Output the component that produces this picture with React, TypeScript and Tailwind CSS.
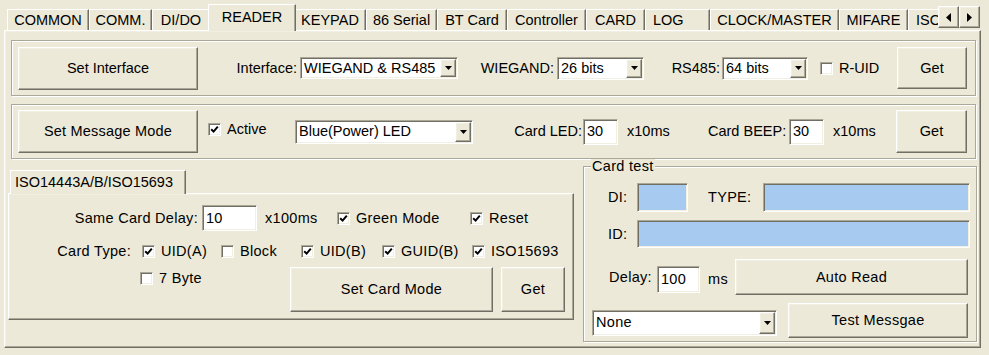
import clsx from 'clsx'
import type { ReactNode } from 'react'

const RAISED =
  'border border-t-white border-l-white border-r-[#716F64] border-b-[#716F64] shadow-[inset_-1px_-1px_0_#ACA899,inset_1px_1px_0_#F1EFE2]'
const SUNKEN =
  'border border-t-[#ACA899] border-l-[#ACA899] border-r-white border-b-white shadow-[inset_1px_1px_0_#716F64,inset_-1px_-1px_0_#F1EFE2]'
const ETCHED = 'border border-[#ACA899] shadow-[inset_1px_1px_0_#fff,1px_1px_0_#fff]'

const TABS = [
  { label: 'COMMON', w: 'w-[82px]' },
  { label: 'COMM.', w: 'w-[63px]' },
  { label: 'DI/DO', w: 'w-[58px]' },
  { label: 'READER', w: 'w-[88px]', active: true },
  { label: 'KEYPAD', w: 'w-[72px]' },
  { label: '86 Serial', w: 'w-[71px]' },
  { label: 'BT Card', w: 'w-[70px]' },
  { label: 'Controller', w: 'w-[79px]' },
  { label: 'CARD', w: 'w-[59px]' },
  { label: 'LOG', w: 'w-[65px]', left: true },
  { label: 'CLOCK/MASTER', w: 'w-[129px]' },
  { label: 'MIFARE', w: 'w-[69px]' },
  { label: 'ISO15693', w: 'w-[80px]', left: true },
]

function Button({ className, children }: { className?: string; children: ReactNode }) {
  return (
    <button type="button" className={clsx('flex shrink-0 items-center justify-center bg-[#ECE9D8]', RAISED, className)}>
      {children}
    </button>
  )
}

function Edit({ className, value }: { className?: string; value?: string }) {
  return <div className={clsx('flex shrink-0 items-center bg-white pl-[3px]', SUNKEN, className)}>{value}</div>
}

function Arrow({ dir }: { dir: 'down' | 'left' | 'right' }) {
  if (dir === 'down')
    return (
      <svg width="7" height="4" viewBox="0 0 7 4">
        <path d="M0 0h7L3.5 4z" fill="#000" />
      </svg>
    )
  return (
    <svg width="5" height="9" viewBox="0 0 5 9">
      <path d={dir === 'left' ? 'M5 0v9L0 4.5z' : 'M0 0v9l5-4.5z'} fill="#000" />
    </svg>
  )
}

function Combo({ className, value }: { className?: string; value: string }) {
  return (
    <div className={clsx('flex shrink-0 items-stretch bg-white', SUNKEN, className)}>
      <span className="flex flex-1 items-center pl-[3px]">{value}</span>
      <span className={clsx('m-px flex w-[16px] items-center justify-center bg-[#ECE9D8]', RAISED)}>
        <Arrow dir="down" />
      </span>
    </div>
  )
}

function Check({ checked }: { checked?: boolean }) {
  return (
    <span className={clsx('flex h-[13px] w-[13px] shrink-0 items-center justify-center bg-white', SUNKEN)}>
      {checked && (
        <svg width="9" height="9" viewBox="0 0 9 9">
          <path d="M1.2 4.2 3.6 6.6 7.8 1.6" stroke="#000" strokeWidth="2" fill="none" />
        </svg>
      )}
    </span>
  )
}

function CheckItem({ label, checked, className }: { label: string; checked?: boolean; className?: string }) {
  return (
    <div className={clsx('flex shrink-0 items-center', className)}>
      <Check checked={checked} />
      <span className="ml-[6px]">{label}</span>
    </div>
  )
}

function Blue({ className }: { className?: string }) {
  return <div className={clsx('shrink-0 bg-[#A6CAF0]', SUNKEN, className)} />
}

function TabStrip() {
  return (
    <div className="flex h-[31px]">
      <div className="flex min-w-0 flex-1 items-end overflow-hidden pl-[7px]">
        {TABS.map((t) =>
          t.active ? (
            <div
              key={t.label}
              className={clsx(
                'relative z-10 -mx-[2px] flex h-[27px] shrink-0 items-center justify-center pb-[1px] bg-[#ECE9D8] border-t border-l border-r border-t-white border-l-white border-r-[#716F64] shadow-[inset_-1px_0_0_#ACA899]',
                t.w,
              )}
            >
              {t.label}
            </div>
          ) : (
            <div
              key={t.label}
              className={clsx(
                'mb-[1px] flex h-[21px] shrink-0 items-center pt-[1px] border-t border-l border-r border-t-white border-l-white border-r-[#716F64] shadow-[inset_-1px_0_0_#ACA899]',
                t.left ? 'pl-[7px]' : 'justify-center',
                t.w,
              )}
            >
              {t.label}
            </div>
          ),
        )}
      </div>
      <div className="mr-[9px] flex items-start pt-[6px]">
        <Button className="h-[22px] w-[21px]">
          <Arrow dir="left" />
        </Button>
        <Button className="h-[22px] w-[21px]">
          <Arrow dir="right" />
        </Button>
      </div>
    </div>
  )
}

function InterfaceGroup() {
  return (
    <div className={clsx('ml-[6px] mr-[4px] flex h-[56px] items-center', ETCHED)}>
      <Button className="ml-[6px] h-[43px] w-[180px]">Set Interface</Button>
      <span className="w-[102px] shrink-0 pr-[3px] text-right">Interface:</span>
      <Combo className="h-[22px] w-[158px]" value="WIEGAND & RS485" />
      <span className="w-[99px] shrink-0 pr-[3px] text-right">WIEGAND:</span>
      <Combo className="h-[23px] w-[87px]" value="26 bits" />
      <span className="w-[78px] shrink-0 pr-[2px] text-right">RS485:</span>
      <Combo className="h-[23px] w-[86px]" value="64 bits" />
      <CheckItem className="ml-[12px]" label="R-UID" />
      <Button className="ml-auto mr-[8px] h-[42px] w-[70px]">Get</Button>
    </div>
  )
}

function MessageGroup() {
  return (
    <div className={clsx('ml-[6px] mr-[4px] mt-[8px] flex h-[55px] items-center', ETCHED)}>
      <Button className="ml-[6px] h-[43px] w-[180px] tracking-[0.2px]">Set Message Mode</Button>
      <CheckItem className="ml-[10px] w-[87px] -mt-[4px]" label="Active" checked />
      <Combo className="h-[24px] w-[178px]" value="Blue(Power) LED" />
      <span className="w-[110px] shrink-0 pr-[1px] text-right">Card LED:</span>
      <Edit className="h-[26px] w-[35px]" value="30" />
      <span className="w-[90px] shrink-0 pl-[9px]">x10ms</span>
      <span className="w-[81px] shrink-0">Card BEEP:</span>
      <Edit className="h-[26px] w-[35px]" value="30" />
      <span className="shrink-0 pl-[9px]">x10ms</span>
      <Button className="ml-auto mr-[8px] h-[43px] w-[71px]">Get</Button>
    </div>
  )
}

function IsoTab() {
  return (
    <div className="ml-[3px] mt-[11px] w-[566px] shrink-0 tracking-[0.3px]">
      <div className="relative z-10 ml-[2px] flex h-[24px] w-[176px] items-center pl-[4px] tracking-normal bg-[#ECE9D8] border-t border-l border-r border-t-white border-l-white border-r-[#716F64] shadow-[inset_-1px_0_0_#ACA899]">
        ISO14443A/B/ISO15693
      </div>
      <div className={clsx('-mt-px h-[127px]', RAISED)}>
        <div className="mt-[11px] flex h-[26px] items-center">
          <span className="w-[193px] shrink-0 pr-[4px] text-right">Same Card Delay:</span>
          <Edit className="h-[26px] w-[55px]" value="10" />
          <span className="w-[80px] shrink-0 pl-[8px]">x100ms</span>
          <CheckItem className="w-[133px]" label="Green Mode" checked />
          <CheckItem label="Reset" checked />
        </div>
        <div className="mt-[10px] flex h-[20px] items-center">
          <span className="w-[133px] shrink-0 pr-[11px] text-right">Card Type:</span>
          <CheckItem className="w-[79px]" label="UID(A)" checked />
          <CheckItem className="w-[80px]" label="Block" />
          <CheckItem className="w-[81px]" label="UID(B)" checked />
          <CheckItem className="w-[90px]" label="GUID(B)" checked />
          <CheckItem label="ISO15693" checked />
        </div>
        <div className="mt-[6px] flex items-start">
          <div className="w-[281px] shrink-0 pl-[131px] pt-[4px]">
            <CheckItem label="7 Byte" />
          </div>
          <Button className="h-[45px] w-[203px]">Set Card Mode</Button>
          <Button className="ml-[8px] h-[45px] w-[64px]">Get</Button>
        </div>
      </div>
    </div>
  )
}

function CardTest() {
  return (
    <div className={clsx('relative ml-[9px] mt-[7px] h-[176px] w-[394px] shrink-0 tracking-[0.3px]', ETCHED)}>
      <span className="absolute -top-[8px] left-[7px] bg-[#ECE9D8] px-px">Card test</span>
      <div className="mt-[16px] flex h-[29px] items-center">
        <span className="w-[53px] shrink-0 pl-[24px]">DI:</span>
        <Blue className="h-[29px] w-[51px]" />
        <span className="w-[75px] shrink-0 pl-[20px]">TYPE:</span>
        <Blue className="h-[29px] w-[207px]" />
      </div>
      <div className="mt-[8px] flex h-[28px] items-center">
        <span className="w-[53px] shrink-0 pl-[24px]">ID:</span>
        <Blue className="h-[28px] w-[333px]" />
      </div>
      <div className="mt-[11px] flex h-[36px] items-center">
        <span className="w-[73px] shrink-0 pl-[25px]">Delay:</span>
        <Edit className="mt-[4px] h-[27px] w-[43px]" value="100" />
        <span className="mt-[4px] w-[35px] shrink-0 pl-[8px]">ms</span>
        <Button className="h-[36px] w-[233px]">Auto Read</Button>
      </div>
      <div className="mt-[8px] flex h-[35px] items-center">
        <Combo className="ml-[8px] mt-[4px] h-[26px] w-[185px]" value="None" />
        <Button className="ml-[11px] h-[35px] w-[180px]">Test Messgae</Button>
      </div>
    </div>
  )
}

export default function App() {
  return (
    <div className="h-[355px] w-[989px] overflow-hidden bg-[#ECE9D8] font-['Liberation_Sans',Arial,sans-serif] text-[14.5px] leading-none text-black">
      <TabStrip />
      <div className={clsx('-mt-px ml-[4px] h-[318px] w-[977px] pt-[9px]', RAISED)}>
        <InterfaceGroup />
        <MessageGroup />
        <div className="flex items-start">
          <IsoTab />
          <CardTest />
        </div>
      </div>
    </div>
  )
}
